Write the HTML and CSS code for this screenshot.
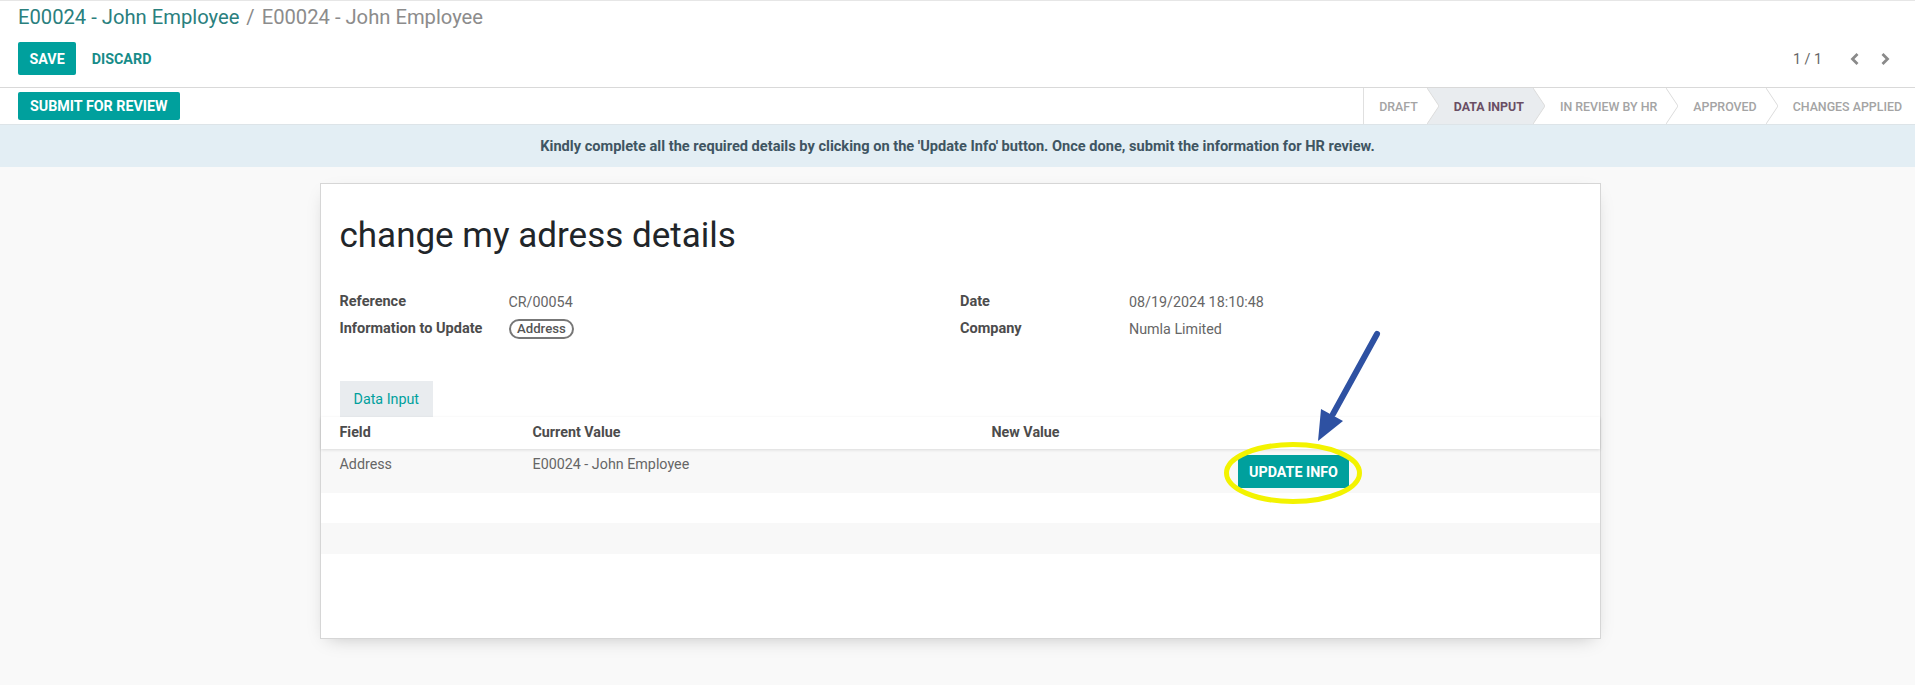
FILE: index.html
```html
<!DOCTYPE html>
<html lang="en">
<head>
<meta charset="utf-8">
<title>E00024 - John Employee</title>
<link rel="stylesheet" href="styles.css">
</head>
<body>
<div class="cp">
  <div class="breadcrumb">
    <span class="bc-link">E00024 - John Employee</span>
    <span class="bc-sep">/</span>
    <span class="bc-current">E00024 - John Employee</span>
  </div>
  <div class="cp-bottom">
    <div class="cp-buttons">
      <button class="btn btn-primary">SAVE</button>
      <button class="btn btn-link">DISCARD</button>
    </div>
    <div class="pager">
      <span class="pager-value">1 / 1</span>
      <span class="pager-btn"><svg width="10" height="14" viewBox="0 0 10 14"><polyline points="7.5,2 2.5,7 7.5,12" fill="none" stroke="#8a8a8a" stroke-width="2.8"/></svg></span>
      <span class="pager-btn"><svg width="10" height="14" viewBox="0 0 10 14"><polyline points="2.5,2 7.5,7 2.5,12" fill="none" stroke="#8a8a8a" stroke-width="2.8"/></svg></span>
    </div>
  </div>
</div>

<div class="status-row">
  <button class="btn btn-primary btn-sm">SUBMIT FOR REVIEW</button>
  <div class="statusbar">
    <span class="step step-first">DRAFT</span>
    <svg class="sep" width="12" height="36" viewBox="0 0 12 36"><polygon points="0,0 12,0 12,36 0,36 12,18" fill="#e9ecef"/><polyline points="0,0 12,18 0,36" fill="none" stroke="#dcdcdc" stroke-width="1"/></svg>
    <span class="step step-active">DATA INPUT</span>
    <svg class="sep" width="12" height="36" viewBox="0 0 12 36"><polygon points="0,0 12,18 0,36" fill="#e9ecef"/><polyline points="0,0 12,18 0,36" fill="none" stroke="#dcdcdc" stroke-width="1"/></svg>
    <span class="step">IN REVIEW BY HR</span>
    <svg class="sep" width="12" height="36" viewBox="0 0 12 36"><polyline points="0,0 12,18 0,36" fill="none" stroke="#dcdcdc" stroke-width="1"/></svg>
    <span class="step">APPROVED</span>
    <svg class="sep" width="12" height="36" viewBox="0 0 12 36"><polyline points="0,0 12,18 0,36" fill="none" stroke="#dcdcdc" stroke-width="1"/></svg>
    <span class="step step-last">CHANGES APPLIED</span>
  </div>
</div>

<div class="alert">Kindly complete all the required details by clicking on the 'Update Info' button. Once done, submit the information for HR review.</div>

<div class="form-bg">
  <div class="sheet">
    <h1 class="title">change my adress details</h1>
    <div class="groups">
      <div class="group">
        <div class="lbl">Reference</div><div class="val">CR/00054</div>
        <div class="lbl">Information to Update</div><div class="val"><span class="pill">Address</span></div>
      </div>
      <div class="group">
        <div class="lbl">Date</div><div class="val">08/19/2024 18:10:48</div>
        <div class="lbl">Company</div><div class="val">Numla Limited</div>
      </div>
    </div>
    <div class="tabs"><span class="tab">Data Input</span></div>
    <div class="list">
      <div class="list-row list-head">
        <div>Field</div><div>Current Value</div><div>New Value</div><div></div>
      </div>
      <div class="list-row list-rec stripe">
        <div class="cell">Address</div><div class="cell">E00024 - John Employee</div><div class="cell"></div>
        <div class="cell-btn"><button class="btn btn-primary btn-update">UPDATE INFO</button></div>
      </div>
      <div class="list-row list-empty"></div>
      <div class="list-row list-empty stripe tall"></div>
    </div>
  </div>
</div>

<svg class="annot" width="1915" height="685" viewBox="0 0 1915 685">
  <ellipse cx="1293" cy="473" rx="66.5" ry="28.5" fill="none" stroke="#f3f300" stroke-width="5"/>
  <line x1="1377" y1="334" x2="1333" y2="414" stroke="#2e51a2" stroke-width="6" stroke-linecap="round"/>
  <polygon points="1318,441 1321,409 1343,421" fill="#2e51a2"/>
</svg>
</body>
</html>
```

FILE: styles.css
```css
* { box-sizing: border-box; }

body {
  margin: 0;
  width: 1915px;
  height: 685px;
  overflow: hidden;
  position: relative;
  background: #f9f9f9;
  font-family: Roboto, "Liberation Sans", Arial, sans-serif;
  font-size: 14.3px;
  color: #4c4c4c;
}

.btn {
  font-family: inherit;
  border: none;
  cursor: pointer;
  font-weight: 700;
  font-size: 14.3px;
  padding: 0 11.5px;
  height: 33px;
  border-radius: 2px;
  background: transparent;
}
.btn-primary { background: #00a09d; color: #fff; }
.btn-link { color: #178c89; margin-left: 4px; }
.btn-sm { height: 28px; font-size: 14.3px; padding: 0 12px; }

/* control panel */
.cp {
  background: #fff;
  border-top: 1px solid #e6e6e6;
  border-bottom: 1px solid #d9d9d9;
  padding: 4px 15px 12px 18px;
}
.breadcrumb {
  font-size: 20.2px;
  line-height: 24px;
  display: flex;
}
.bc-link { color: #2a807e; }
.bc-sep { color: #8a8a8a; margin: 0 7px 0 7px; }
.bc-current { color: #8c8c8c; }

.cp-bottom {
  margin-top: 13px;
  display: flex;
  justify-content: space-between;
  align-items: center;
  height: 33px;
}
.cp-buttons { display: flex; }
.pager { display: flex; align-items: center; color: #666; }
.pager-value { margin-right: 18px; }
.pager-btn {
  width: 30px;
  height: 30px;
  display: flex;
  align-items: center;
  justify-content: center;
}

/* status row */
.status-row {
  background: #fff;
  height: 37px;
  border-bottom: 1px solid #dde4e8;
  display: flex;
  align-items: center;
  padding-left: 18px;
}
.statusbar {
  margin-left: auto;
  align-self: stretch;
  display: flex;
  border-left: 1px solid #e0e0e0;
}
.step {
  display: flex;
  align-items: center;
  padding: 0 9px 0 15px;
  font-size: 12.4px;
  font-weight: 500;
  color: #a4a4a4;
  white-space: nowrap;
}
.step-active { background: #e9ecef; color: #6a4e64; font-weight: 700; }
.step-last { padding-right: 13px; }
.sep { display: block; flex: none; }

/* alert */
.alert {
  height: 42px;
  line-height: 42px;
  background: #e3eef4;
  color: #3f5562;
  font-weight: 700;
  font-size: 14.6px;
  text-align: center;
}

/* form */
.form-bg {
  display: flex;
  justify-content: center;
  padding: 16px 0 0 5px;
}
.sheet {
  width: 1281px;
  background: #fff;
  border: 1px solid #d6d6d6;
  box-shadow: 0 6px 18px -8px rgba(0, 0, 0, 0.25);
  padding: 31px 0 84px;
}
.title {
  margin: 0 19px;
  font-size: 35px;
  line-height: 42px;
  font-weight: 400;
  color: #212529;
}
.groups {
  margin: 31px 19px 0;
  display: grid;
  grid-template-columns: 1fr 1fr;
}
.group {
  display: grid;
  grid-template-columns: 169px 1fr;
  grid-auto-rows: 27px;
  align-items: center;
}
.lbl { font-weight: 700; color: #4c4c4c; font-size: 14.5px; }
.val { color: #666; }
.pill {
  display: inline-flex;
  align-items: center;
  height: 20px;
  padding: 0 6.5px;
  border: 2px solid #777;
  border-radius: 10px;
  font-size: 13.2px;
  font-weight: 500;
  color: #555;
}

.tabs { margin: 39px 19px 0; display: flex; }
.tab {
  height: 36px;
  line-height: 36px;
  padding: 0 14px;
  background: #e9ecef;
  color: #00a09d;
}

.list-row {
  display: grid;
  grid-template-columns: 193px 459px 246px 1fr;
  padding-left: 19px;
}
.list-head {
  height: 32px;
  padding-top: 5px;
  line-height: 20px;
  font-weight: 700;
  color: #4c4c4c;
  position: relative;
  box-shadow: 0 1px 3px rgba(0, 0, 0, 0.12);
}
.list-rec { height: 44px; color: #666; }
.cell { padding-top: 5px; line-height: 20px; }
.cell-btn { padding-top: 6px; }
.stripe { background: #f8f8f8; }
.list-empty { height: 30px; }
.tall { height: 31px; }

.annot {
  position: absolute;
  left: 0;
  top: 0;
  pointer-events: none;
}
```
